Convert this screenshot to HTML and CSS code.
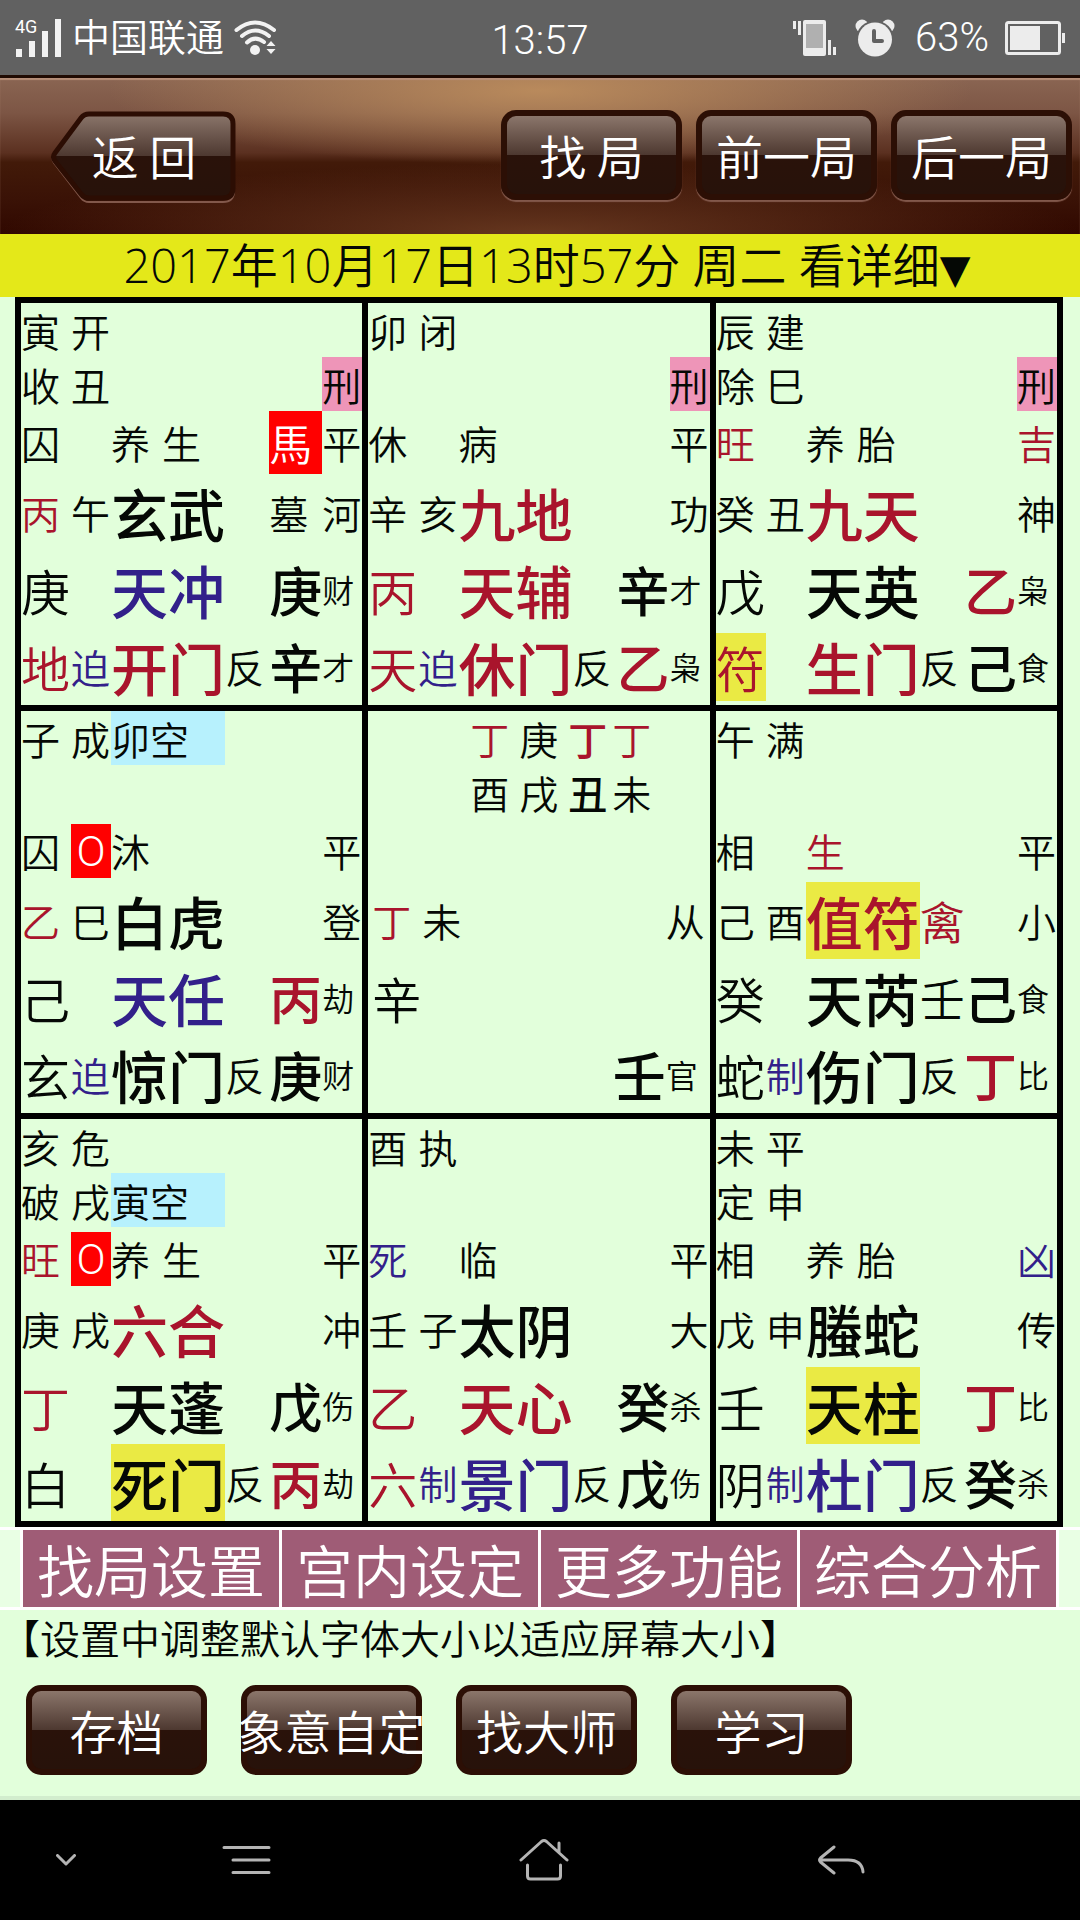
FILE: index.html
```html
<!DOCTYPE html>
<html lang="zh-CN">
<head>
<meta charset="utf-8">
<meta name="viewport" content="width=device-width, initial-scale=1">
<title>奇门排盘</title>
<link rel="stylesheet" href="styles.css">
</head>
<body>
<div class="status">
  <div class="status-left">
    <span class="signal"><span class="net">4G</span><svg width="50" height="38" viewBox="0 0 50 38" fill="#f2f2f2"><rect x="1" y="30" width="6" height="8"/><rect x="14" y="22" width="6" height="16"/><rect x="27" y="12" width="6" height="26"/><rect x="40" y="0" width="6" height="38"/></svg></span>
    <span class="carrier">中国联通</span>
    <svg class="wifi" width="44" height="36" viewBox="0 0 44 36"><g fill="none" stroke="#f2f2f2" stroke-width="4" stroke-linecap="round"><path d="M2.500 10Q21 -5 40 10"/><path d="M8 16Q21 5 35 16"/><path d="M13 22.500Q21 15 30 22"/></g><circle cx="21" cy="30" r="5" fill="#f2f2f2"/><path d="M37 21l4.500 5h-9zM37 34l4.500-5h-9z" fill="#f2f2f2"/></svg>
  </div>
  <time class="clock">13:57</time>
  <div class="status-right">
    <svg width="44" height="36" viewBox="0 0 44 36"><rect x="10" y="0" width="23" height="36" rx="2" fill="#ececec"/><rect x="13" y="4" width="17" height="24" fill="#b0b0b0"/><path d="M1.500 1v8M6.500 1v14M36.500 20v15M41.500 27v8" stroke="#ececec" stroke-width="3"/></svg>
    <svg class="alarm" width="40" height="38" viewBox="0 0 40 38"><circle cx="7" cy="7" r="6.500" fill="#ececec"/><circle cx="33" cy="7" r="6.500" fill="#ececec"/><circle cx="20" cy="20.500" r="19" fill="#616161"/><circle cx="20" cy="20.500" r="17" fill="#ececec"/><path d="M19 12v10h8" fill="none" stroke="#616161" stroke-width="4" stroke-linecap="round" stroke-linejoin="round"/></svg>
    <span class="percent">63%</span>
    <svg width="60" height="34" viewBox="0 0 60 34"><rect x="1.500" y="1.500" width="53" height="31" rx="2" fill="none" stroke="#ececec" stroke-width="3"/><rect x="5" y="5" width="30" height="24" fill="#ececec"/><rect x="57" y="12" width="3" height="10" fill="#ececec"/></svg>
  </div>
</div>

<header class="header">
  <button class="back" type="button">
    <svg class="back-shape" viewBox="0 0 188 94" aria-hidden="true">
      <defs><linearGradient id="gloss" x1="0" y1="0" x2="0" y2="1"><stop offset="0" stop-color="#8b766b"/><stop offset=".5" stop-color="#4d3830"/><stop offset=".5" stop-color="#2a120a"/><stop offset="1" stop-color="#27120a"/></linearGradient></defs>
      <path d="M39 5H173Q184 5 184 16V81Q184 92 173 92H39Q34 92 31 88L4 53Q1 49 4 45L31 9Q34 5 39 5Z" fill="none" stroke="#82584b" stroke-width="2"/>
      <path d="M39 4H173Q183 4 183 14V78Q183 88 173 88H39Q34 88 31 84L5 51Q2 47 5 43L31 8Q34 4 39 4Z" fill="url(#gloss)" stroke="#2c0d03" stroke-width="5"/>
    </svg>
    <span class="back-label">返 回</span>
  </button>
  <nav class="header-actions">
    <button class="btn" type="button">找 局</button>
    <button class="btn" type="button">前一局</button>
    <button class="btn" type="button">后一局</button>
  </nav>
</header>

<main class="main">
  <button class="datebar" type="button">2017年10月17日13时57分 周二 看详细<span class="caret">▼</span></button>

  <section class="board">
    <div class="palace">
      <div class="row short"><span class="c1">寅</span><span class="c2">开</span></div>
      <div class="row short"><span class="c1">收</span><span class="c2">丑</span><span class="c6 pink">刑</span></div>
      <div class="row mid"><span class="c1">囚</span><span class="c3 pair"><span>养</span><span>生</span></span><span class="c5 horse">馬</span><span class="c6">平</span></div>
      <div class="row"><span class="c1 red">丙</span><span class="c2">午</span><span class="c3 big">玄武</span><span class="c5">墓</span><span class="c6">河</span></div>
      <div class="row"><span class="c1 stem">庚</span><span class="c3 big blue">天冲</span><span class="c5 strong">庚</span><span class="c6 tiny">财</span></div>
      <div class="row"><span class="c1 stem red">地</span><span class="c2 blue">迫</span><span class="c3 big red">开门</span><span class="c4">反</span><span class="c5 strong">辛</span><span class="c6 tiny">才</span></div>
    </div>
    <div class="palace">
      <div class="row short"><span class="c1">卯</span><span class="c2">闭</span></div>
      <div class="row short"><span class="c6 pink">刑</span></div>
      <div class="row mid"><span class="c1">休</span><span class="c3">病</span><span class="c6">平</span></div>
      <div class="row"><span class="c1">辛</span><span class="c2">亥</span><span class="c3 big red">九地</span><span class="c6">功</span></div>
      <div class="row"><span class="c1 stem red">丙</span><span class="c3 big red">天辅</span><span class="c5 strong">辛</span><span class="c6 tiny">才</span></div>
      <div class="row"><span class="c1 stem red">天</span><span class="c2 blue">迫</span><span class="c3 big red">休门</span><span class="c4">反</span><span class="c5 strong red">乙</span><span class="c6 tiny">枭</span></div>
    </div>
    <div class="palace">
      <div class="row short"><span class="c1">辰</span><span class="c2">建</span></div>
      <div class="row short"><span class="c1">除</span><span class="c2">巳</span><span class="c6 pink">刑</span></div>
      <div class="row mid"><span class="c1 red">旺</span><span class="c3 pair"><span>养</span><span>胎</span></span><span class="c6 red">吉</span></div>
      <div class="row"><span class="c1">癸</span><span class="c2">丑</span><span class="c3 big red">九天</span><span class="c6">神</span></div>
      <div class="row"><span class="c1 stem">戊</span><span class="c3 big">天英</span><span class="c5 strong red">乙</span><span class="c6 tiny">枭</span></div>
      <div class="row"><span class="c1 stem red mark">符</span><span class="c3 big red">生门</span><span class="c4">反</span><span class="c5 strong">己</span><span class="c6 tiny">食</span></div>
    </div>

    <div class="palace">
      <div class="row short"><span class="c1">子</span><span class="c2">成</span><span class="c3 void">卯空</span></div>
      <div class="row short"></div>
      <div class="row mid"><span class="c1">囚</span><span class="c2 ring">O</span><span class="c3">沐</span><span class="c6">平</span></div>
      <div class="row"><span class="c1 red">乙</span><span class="c2">巳</span><span class="c3 big">白虎</span><span class="c6">登</span></div>
      <div class="row"><span class="c1 stem">己</span><span class="c3 big blue">天任</span><span class="c5 strong red">丙</span><span class="c6 tiny">劫</span></div>
      <div class="row"><span class="c1 stem">玄</span><span class="c2 blue">迫</span><span class="c3 big">惊门</span><span class="c4">反</span><span class="c5 strong">庚</span><span class="c6 tiny">财</span></div>
    </div>
    <div class="palace center">
      <div class="row short pillars"><span class="red">丁</span><span>庚</span><b class="red">丁</b><span class="red">丁</span></div>
      <div class="row short pillars"><span>酉</span><span>戌</span><b>丑</b><span>未</span></div>
      <div class="row mid"></div>
      <div class="row"><span class="c1 red">丁</span><span class="c2">未</span><span class="c6">从</span></div>
      <div class="row"><span class="c1 stem">辛</span></div>
      <div class="row"><span class="c5 strong">壬</span><span class="c6 tiny">官</span></div>
    </div>
    <div class="palace">
      <div class="row short"><span class="c1">午</span><span class="c2">满</span></div>
      <div class="row short"></div>
      <div class="row mid"><span class="c1">相</span><span class="c3 red">生</span><span class="c6">平</span></div>
      <div class="row"><span class="c1">己</span><span class="c2">酉</span><span class="c3 big red yellow">值符</span><span class="c4 guest red">禽</span><span class="c6">小</span></div>
      <div class="row"><span class="c1 stem">癸</span><span class="c3 big">天芮</span><span class="c4 guest">壬</span><span class="c5 strong">己</span><span class="c6 tiny">食</span></div>
      <div class="row"><span class="c1 stem">蛇</span><span class="c2 blue">制</span><span class="c3 big">伤门</span><span class="c4">反</span><span class="c5 strong red">丁</span><span class="c6 tiny">比</span></div>
    </div>

    <div class="palace">
      <div class="row short"><span class="c1">亥</span><span class="c2">危</span></div>
      <div class="row short"><span class="c1">破</span><span class="c2">戌</span><span class="c3 void">寅空</span></div>
      <div class="row mid"><span class="c1 red">旺</span><span class="c2 ring">O</span><span class="c3 pair"><span>养</span><span>生</span></span><span class="c6">平</span></div>
      <div class="row"><span class="c1">庚</span><span class="c2">戌</span><span class="c3 big red">六合</span><span class="c6">冲</span></div>
      <div class="row"><span class="c1 stem red">丁</span><span class="c3 big">天蓬</span><span class="c5 strong">戊</span><span class="c6 tiny">伤</span></div>
      <div class="row"><span class="c1 stem">白</span><span class="c3 big yellow">死门</span><span class="c4">反</span><span class="c5 strong red">丙</span><span class="c6 tiny">劫</span></div>
    </div>
    <div class="palace">
      <div class="row short"><span class="c1">酉</span><span class="c2">执</span></div>
      <div class="row short"></div>
      <div class="row mid"><span class="c1 blue">死</span><span class="c3">临</span><span class="c6">平</span></div>
      <div class="row"><span class="c1">壬</span><span class="c2">子</span><span class="c3 big">太阴</span><span class="c6">大</span></div>
      <div class="row"><span class="c1 stem red">乙</span><span class="c3 big red">天心</span><span class="c5 strong">癸</span><span class="c6 tiny">杀</span></div>
      <div class="row"><span class="c1 stem red">六</span><span class="c2 blue">制</span><span class="c3 big blue">景门</span><span class="c4">反</span><span class="c5 strong">戊</span><span class="c6 tiny">伤</span></div>
    </div>
    <div class="palace">
      <div class="row short"><span class="c1">未</span><span class="c2">平</span></div>
      <div class="row short"><span class="c1">定</span><span class="c2">申</span></div>
      <div class="row mid"><span class="c1">相</span><span class="c3 pair"><span>养</span><span>胎</span></span><span class="c6 blue">凶</span></div>
      <div class="row"><span class="c1">戊</span><span class="c2">申</span><span class="c3 big">螣蛇</span><span class="c6">传</span></div>
      <div class="row"><span class="c1 stem">壬</span><span class="c3 big yellow">天柱</span><span class="c5 strong red">丁</span><span class="c6 tiny">比</span></div>
      <div class="row"><span class="c1 stem">阴</span><span class="c2 blue">制</span><span class="c3 big blue">杜门</span><span class="c4">反</span><span class="c5 strong">癸</span><span class="c6 tiny">杀</span></div>
    </div>
  </section>

  <div class="tabs-band">
    <div class="tabs">
      <button class="tab" type="button">找局设置</button>
      <button class="tab" type="button">宫内设定</button>
      <button class="tab" type="button">更多功能</button>
      <button class="tab" type="button">综合分析</button>
    </div>
  </div>

  <p class="notice">【设置中调整默认字体大小以适应屏幕大小】</p>

  <div class="tools">
    <button class="btn" type="button">存档</button>
    <button class="btn" type="button">象意自定</button>
    <button class="btn" type="button">找大师</button>
    <button class="btn" type="button">学习</button>
  </div>
</main>

<nav class="navbar">
  <button class="nav-hide" type="button" aria-label="隐藏"><svg width="20" height="12" viewBox="0 0 20 12"><path d="M1.500 1.500L10 10l8.500-8.500"/></svg></button>
  <button type="button" aria-label="菜单"><svg width="50" height="30" viewBox="0 0 50 30"><path d="M2 2.500H47M11 15H47M11 27.500H47"/></svg></button>
  <button type="button" aria-label="主页"><svg width="50" height="44" viewBox="0 0 50 44"><path d="M2 22L22.500 3.500Q25 1.500 27.500 3.500L48 22M40 14V5M8.500 27V38Q8.500 41 11.500 41H38.500Q41.500 41 41.500 38V27"/></svg></button>
  <button type="button" aria-label="返回"><svg width="48" height="30" viewBox="0 0 48 30"><path d="M17 2L3.500 13Q1.500 15 3.500 17L17 28M3 15H31Q45 15 46 27"/></svg></button>
</nav>
</body>
</html>
```
FILE: styles.css
```css
* { box-sizing: border-box; }

body {
  margin: 0;
  min-height: 100vh;
  display: flex;
  flex-direction: column;
  background: #e2ffdb;
  color: #050805;
  font-family: "Noto Sans CJK SC", sans-serif;
  font-weight: 350;
}

button {
  margin: 0;
  padding: 0;
  border: 0;
  background: none;
  color: inherit;
  font: inherit;
}

svg { display: block; }

/* phone status bar */
.status {
  height: 75px;
  padding: 0 15px;
  display: grid;
  grid-template-columns: 1fr auto 1fr;
  align-items: center;
  background: #616161;
  color: #fff;
  font-family: Roboto, "Noto Sans CJK SC", sans-serif;
}
.status-left, .status-right { display: flex; align-items: center; }
.status-right { justify-content: flex-end; }
.signal { position: relative; }
.net {
  position: absolute;
  top: -2px;
  left: 0;
  font-size: 18px;
  font-weight: 400;
  line-height: 20px;
}
.carrier { margin: 0 10px 0 7px; font-size: 38px; line-height: 48px; }
.clock { padding-top: 6px; font-size: 40px; font-weight: 350; line-height: 48px; }
.alarm { margin: 0 20px 0 18px; }
.percent { margin-right: 16px; font-size: 40px; font-weight: 350; line-height: 48px; }

/* app header */
.header {
  height: 159px;
  padding: 0 8px 3px 50px;
  display: flex;
  align-items: center;
  justify-content: space-between;
  border-top: 3px solid #1f0a02;
  box-shadow: inset 0 2px 1px #b58e78;
  color: #fff;
  background:
    radial-gradient(ellipse 40% 48% at 50% 8%, #b98a5c, transparent),
    radial-gradient(ellipse 50% 45% at 50% 100%, #66371f, transparent),
    linear-gradient(#8a6552, #7d5645 22%, #5b3020 48%, #421a09 54%, #3a1206 78%, #300800);
}
.header-actions { display: flex; gap: 14px; }
.back, .btn { height: 90px; font-size: 47px; line-height: 78px; }
.back { position: relative; width: 188px; }
.back-shape { position: absolute; inset: 0; }
.back-label { position: relative; }
.btn {
  width: 181px;
  border: 6px solid #2c0f05;
  border-radius: 15px;
  background: linear-gradient(#8b766b, #4d3830 50%, #2a120a 50%, #27120a);
  color: #fff;
  display: flex;
  align-items: center;
  justify-content: center;
  white-space: nowrap;
}
.header .btn { box-shadow: 0 2px 1px #82584b; }

.main { flex: 1; border-bottom: 4px solid #d2edcd; }

.datebar {
  display: block;
  width: 100%;
  height: 63px;
  padding-left: 14px;
  background: #e4e819;
  font-family: "Open Sans", "Noto Sans CJK SC", sans-serif;
  font-size: 47px;
  line-height: 63px;
  white-space: nowrap;
}
.caret { font-family: "DejaVu Sans", sans-serif; font-size: 40px; font-weight: 400; }

/* nine-palace chart */
.board {
  margin: 0 17px 0 15px;
  padding: 6px;
  display: grid;
  grid-template-columns: repeat(3, minmax(0, 1fr));
  gap: 6px;
  background: #000;
}
.palace { background: #e2ffdb; font-size: 39px; }
.row {
  display: grid;
  grid-template-columns:
    minmax(0, 50fr) minmax(0, 40fr) minmax(0, 114fr)
    minmax(0, 44fr) minmax(0, 53fr) minmax(0, 40fr);
  height: 77px;
  line-height: 77px;
  white-space: nowrap;
}
.row.mid { height: 63px; line-height: 63px; }
.row.short { height: 54px; line-height: 54px; }
.c1 { grid-column: 1; }
.c2 { grid-column: 2; }
.c3 { grid-column: 3; }
.c4 { grid-column: 4; }
.c5 { grid-column: 5; }
.c6 { grid-column: 6; }
.pair { display: flex; gap: 12px; }
.big { font-size: 57px; font-weight: 500; }
.stem { font-size: 49px; }
.strong { font-size: 53px; font-weight: 500; }
.guest { font-size: 45px; }
.tiny { font-size: 32px; }
.red { color: #a9142c; }
.blue { color: #32208a; }
.pink { background: #ee95b8; }
.void { background: #b7f1fd; }
.yellow { background: #eaea44; }
.horse { background: #f00; color: #fff; font-size: 43px; }
.ring {
  align-self: center;
  background: #f00;
  color: #fff;
  font-family: Roboto, sans-serif;
  font-size: 43px;
  line-height: 54px;
  text-align: center;
}
.mark {
  align-self: center;
  background: #eaea44;
  line-height: 68px;
}
.center { padding: 0 4px; }
.center .row {
  grid-template-columns:
    minmax(0, 50fr) minmax(0, 40fr) minmax(0, 107fr)
    minmax(0, 44fr) minmax(0, 53fr) minmax(0, 40fr);
}
.center .pillars {
  padding-left: 98px;
  grid-template-columns: 49px 49px 44px 40px;
}
.pillars b { font-weight: 500; }

/* function tabs */
.tabs-band { padding: 3px 0; background: #fff linear-gradient(#e9ffe4, #e9ffe4) 0 3px / 100% 77px no-repeat; }
.tabs {
  margin: 0 21px 0 20px;
  padding: 0 3px;
  display: grid;
  grid-template-columns: repeat(4, minmax(0, 1fr));
  gap: 3px;
  background: #fff;
}
.tab {
  height: 77px;
  background: #9f5c76;
  color: #fff;
  font-size: 57px;
  line-height: 77px;
}

.notice { margin: 0; font-size: 40px; line-height: 54px; white-space: nowrap; }
.tools { padding: 21px 26px; display: flex; gap: 34px; }

/* phone navigation keys */
.navbar {
  height: 120px;
  display: grid;
  grid-template-columns: 98fr 297fr 297fr 297fr 91fr;
  background: #000;
}
.navbar button { display: flex; align-items: center; justify-content: center; }
.navbar svg { fill: none; stroke: #b4b4b4; stroke-width: 3; stroke-linecap: round; stroke-linejoin: round; }
.navbar .nav-hide { padding-left: 33px; }
```
